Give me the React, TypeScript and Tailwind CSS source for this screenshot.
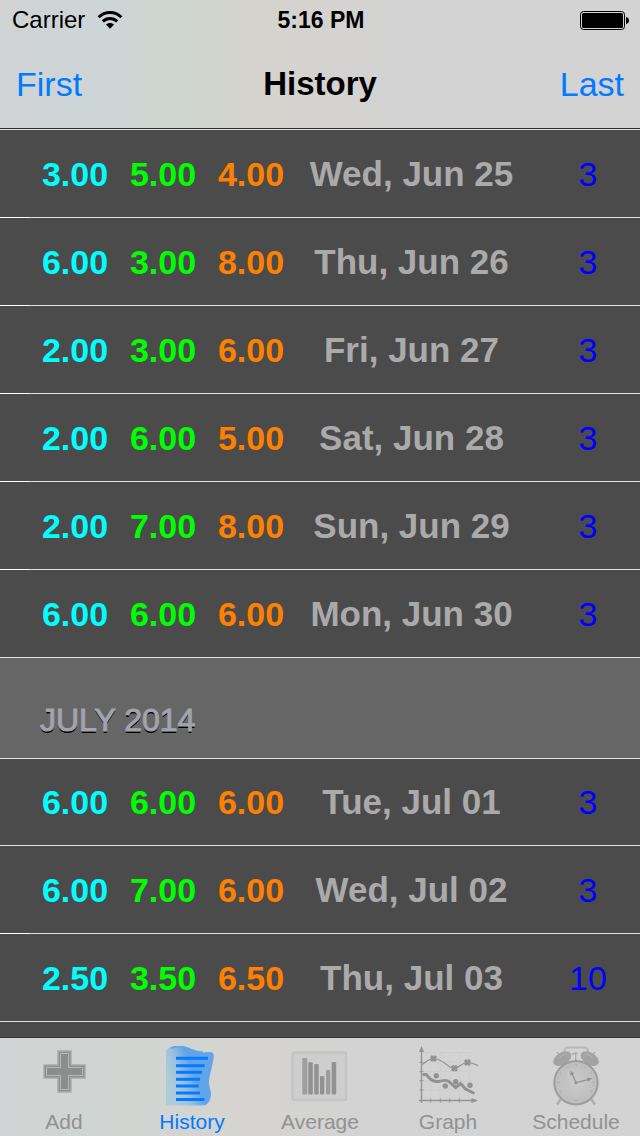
import type { ReactNode } from "react";

type Entry = { a: string; b: string; c: string; date: string; count: number };

const june: Entry[] = [
  { a: "3.00", b: "5.00", c: "4.00", date: "Wed, Jun 25", count: 3 },
  { a: "6.00", b: "3.00", c: "8.00", date: "Thu, Jun 26", count: 3 },
  { a: "2.00", b: "3.00", c: "6.00", date: "Fri, Jun 27", count: 3 },
  { a: "2.00", b: "6.00", c: "5.00", date: "Sat, Jun 28", count: 3 },
  { a: "2.00", b: "7.00", c: "8.00", date: "Sun, Jun 29", count: 3 },
  { a: "6.00", b: "6.00", c: "6.00", date: "Mon, Jun 30", count: 3 },
];

const july: Entry[] = [
  { a: "6.00", b: "6.00", c: "6.00", date: "Tue, Jul 01", count: 3 },
  { a: "6.00", b: "7.00", c: "6.00", date: "Wed, Jul 02", count: 3 },
  { a: "2.50", b: "3.50", c: "6.50", date: "Thu, Jul 03", count: 10 },
];

function WifiIcon() {
  return (
    <svg width="26" height="20" viewBox="0 0 26 20" fill="none" stroke="#000" strokeWidth="3" aria-hidden="true">
      <path d="M1.600 7.200C8 .9 18 .9 24.400 7.200" />
      <path d="M5.800 11.400c4-3.900 10.400-3.900 14.400 0" />
      <path d="M8.900 14.600c2.300-2.200 5.900-2.200 8.200 0L13 18.700z" fill="#000" stroke="none" />
    </svg>
  );
}

function BatteryIcon() {
  return (
    <svg width="50" height="20" viewBox="0 0 50 20" aria-hidden="true">
      <rect x="0.500" y="1.500" width="44" height="18" rx="3" fill="none" stroke="#000" />
      <rect x="2" y="3" width="41" height="15" rx="1.500" fill="#000" />
      <path d="M46 7c2 .5 3 1.800 3 3.500S48 13.500 46 14z" fill="#000" />
    </svg>
  );
}

function AddIcon() {
  return (
    <svg width="60" height="60" viewBox="0 0 60 60" aria-hidden="true">
      <path d="M24 5h13v14h14v13H37v14H24V32H10V19h14z" fill="#8f9090" stroke="#aaacac" strokeWidth="1.500" />
      <path d="M26.500 7.500h8v14h14v8h-14v14h-8v-14h-14v-8h14z" fill="#8c8d8d" stroke="#b6b8b8" strokeWidth="1" />
    </svg>
  );
}

function HistoryIcon() {
  const lines = [
    [12.3, 46],
    [19.7, 42.7],
    [26.3, 40],
    [33.3, 38],
    [40, 36.5],
    [47, 38],
    [53.5, 42.3],
  ];
  return (
    <svg width="60" height="60" viewBox="0 0 60 60" aria-hidden="true">
      <defs>
        <linearGradient id="scroll" x1="2" y1="34" x2="46" y2="18" gradientUnits="userSpaceOnUse">
          <stop offset="0.100" stopColor="#aecbd9" />
          <stop offset="0.350" stopColor="#9ec2dd" />
          <stop offset="0.650" stopColor="#60a3e8" />
          <stop offset="1" stopColor="#62a5ea" />
        </linearGradient>
      </defs>
      <path
        d="M4 6.500C4 2.500 8 1 12 .5C18-.500 23 .5 29.500 3.800C33 5.600 37 6.500 41 6.500L48 6C51 6 52 7.500 51.700 11C50.800 20 47 29 47 37C47 42 50 46 48.700 51C47.500 56 45 59.500 40 59.500H7C5 59.500 4 58.500 4 57z"
        fill="url(#scroll)"
      />
      <path d="M9 2C16-.500 23 .5 29.500 4C33 5.800 37 6.500 41 6.500" fill="none" stroke="#62a5ea" strokeWidth="2" />
      {lines.map(([y, x]) => (
        <path key={y} d={`M14 ${y}H${x}`} stroke="#057bfb" strokeWidth="3" />
      ))}
    </svg>
  );
}

function AverageIcon() {
  return (
    <svg width="60" height="60" viewBox="0 0 60 60" aria-hidden="true">
      <rect x="2.500" y="6.500" width="53.500" height="47.500" rx="2" fill="#cecece" stroke="#c5c5c5" strokeWidth="2.500" />
      <g fill="#929292">
        <rect x="12.300" y="12" width="5" height="36.500" rx="1" fill="#9e9e9e" />
        <rect x="18.300" y="16.300" width="4.500" height="32.200" rx="1" />
        <rect x="24.200" y="18" width="4.500" height="30.500" rx="1" />
        <rect x="30" y="30" width="4.300" height="18.500" rx="1" />
        <rect x="36" y="24" width="4.300" height="24.500" rx="1" fill="#9c9c9c" />
        <rect x="41.700" y="16" width="4.500" height="32.500" rx="1" />
      </g>
    </svg>
  );
}

function GraphIcon() {
  const crosses = [
    [15.5, 12.5],
    [36.5, 22.3],
    [49.5, 16.5],
  ];
  return (
    <svg width="60" height="60" viewBox="0 0 60 60" fill="none" stroke="#929292" aria-hidden="true">
      <path d="M5 6.500h50M5 16h50M5 25.500h50M5 35h50M5 44h50M12.700 6v47M22.300 6v47M31.700 6v47M41.300 6v47M51 6v47" stroke="#cecece" />
      <path d="M3.500 3v54M1 54.500h56" strokeWidth="1.300" />
      <path d="M1.500 16.300h4M1.500 25.700h4M1.500 34.700h4M1.500 44h4M12.700 52.500v4M22.300 52.500v4M31.700 52.500v4M41.300 52.500v4" />
      <path d="M3.500 0L6 6H1zM60 54.500L53.500 52v5z" fill="#929292" stroke="none" />
      <path d="M4.300 18.500C8 16 11 12.500 15.500 12.500S26 16.500 28.500 18.500S33 22.800 37 22.300S44 16.500 49.500 16.500C54 16.500 56 17.500 60 19.500" strokeWidth="1.200" />
      {crosses.map(([x, y]) => (
        <path key={x} d={`M${x - 2.5} ${y - 2.5}l5 5m0-5l-5 5`} strokeWidth="3" />
      ))}
      <path d="M4.500 28.500h4C10 31 11 32 13 33.500C15.500 35.500 17 35.800 20 35.500C24 35 27 33.500 29.500 34.800C33 36.800 35 39.500 37.700 41.500L42.700 37.500L47.500 43L56.500 47.500" strokeWidth="3" />
      <g fill="#929292" stroke="none">
        <circle cx="18.300" cy="29.700" r="2.700" />
        <circle cx="27.300" cy="40" r="2.700" />
        <circle cx="37.700" cy="35.700" r="2.700" />
        <circle cx="52" cy="39.300" r="2.700" />
      </g>
    </svg>
  );
}

function ScheduleIcon() {
  return (
    <svg width="60" height="60" viewBox="0 0 60 60" fill="none" aria-hidden="true">
      <defs>
        <radialGradient id="dial">
          <stop offset="0" stopColor="#cbcbcb" />
          <stop offset="1" stopColor="#bcbcbc" />
        </radialGradient>
      </defs>
      <path d="M15.500 52L11 58.500M44.500 52L49 58.500" stroke="#b0b0b0" strokeWidth="2.600" />
      <path d="M11 6l3 4M49 6l-3 4" stroke="#b4b4b4" strokeWidth="2" />
      <path d="M18.500 8.500V5C18.500 2.500 20 1.500 22.500 1.500H38C40.500 1.500 42 2.500 42 5V8.500" stroke="#b8b8b8" strokeWidth="2" />
      <path d="M29.700 7v7M26 8l5.500-1" stroke="#aaaaaa" strokeWidth="1.400" />
      <ellipse cx="16.300" cy="12.700" rx="10" ry="6" fill="#a3a3a3" transform="rotate(-32 16.300 12.700)" />
      <ellipse cx="43.700" cy="12.700" rx="10" ry="6" fill="#a3a3a3" transform="rotate(32 43.700 12.700)" />
      <path d="M11.500 13.500C14 10.500 17 8.700 21 8M48.500 13.500C46 10.500 43 8.700 39 8" stroke="#b2b2b2" />
      <circle cx="30" cy="36.700" r="21.700" fill="url(#dial)" stroke="#9d9d9d" strokeWidth="2" />
      <path d="M30 18v2M30 53v2M11.500 36.500h2M46.500 36.500h2M20.700 20.500l.5 1M39.300 20.500l-.5 1M14 27.200l1 .5M46 27.200l-1 .5M14 45.800l1-.5M46 45.800l-1-.5M20.700 52.500l.5-1M39.300 52.500l-.5-1" stroke="#a6a6a6" />
      <path d="M30 36.700L25.700 27M30 36.700L43 33.300" stroke="#929292" strokeWidth="1.300" />
      <path d="M24.700 24.800l3.500 3-4 1.700zM46.500 32.400l-4.500 3-1-3.800z" fill="#929292" />
      <circle cx="30" cy="36.700" r="1.500" fill="#929292" />
    </svg>
  );
}

function Row({ entry }: { entry: Entry }) {
  return (
    <tr className="grid h-[88px] grid-cols-[88px_88px_88px_1fr_112px] items-center border-b border-[#e4e4e4] pl-[31px] text-center text-[34px] leading-10 [border-image:linear-gradient(to_right,#fff_30px,#e4e4e4_30px)_1] last:[border-image:none]">
      <td className="font-bold text-[#00ffff]">{entry.a}</td>
      <td className="font-bold text-[#00ff00]">{entry.b}</td>
      <td className="font-bold text-[#ff8000]">{entry.c}</td>
      <td className="whitespace-nowrap text-[35px] font-bold text-[#aaaaaa]">{entry.date}</td>
      <td className="pl-2 text-[#0000ff]">{entry.count}</td>
    </tr>
  );
}

function Tab({ label, icon, active = false }: { label: string; icon: ReactNode; active?: boolean }) {
  return (
    <a
      href={`#${label.toLowerCase()}`}
      aria-current={active ? "page" : undefined}
      className={`flex flex-col items-center gap-1 pt-2 text-[21px] leading-6 ${active ? "text-[#007aff]" : "text-[#929292]"}`}
    >
      {icon}
      {label}
    </a>
  );
}

export default function App() {
  return (
    <div className="flex h-screen flex-col bg-[#4b4b4b] font-['Liberation_Sans',Arial,sans-serif]">
      <header className="border-b border-[#2c2c2e] bg-[#d3d3d3] bg-[linear-gradient(to_right,#d1d3d4_0%,#cdd5d7_13%,#cdd6d0_26%,#d4d4cd_38%,#d5d3d0_48%,#d3d3d3_62%)]">
        <div className="grid h-10 grid-cols-3 items-center pr-2.5 pl-3 text-[24px] leading-7 text-black">
          <div className="flex items-center gap-3">
            <span>Carrier</span>
            <WifiIcon />
          </div>
          <time className="text-center text-[23px] font-bold">5:16 PM</time>
          <div className="flex justify-end">
            <BatteryIcon />
          </div>
        </div>
        <div className="grid h-[88px] grid-cols-3 items-center px-4 text-[34px] leading-10">
          <button type="button" className="justify-self-start text-[#007aff]">First</button>
          <h1 className="text-center text-[33px] font-bold text-black">History</h1>
          <button type="button" className="justify-self-end text-[#007aff]">Last</button>
        </div>
      </header>

      <main className="min-h-0 flex-1 overflow-hidden">
        <table className="block w-full">
          <tbody className="block border-t border-[#e4e4e4]">
            {june.map((e) => (
              <Row key={e.date} entry={e} />
            ))}
          </tbody>
          <tbody className="block">
            <tr className="block">
              <th
                scope="colgroup"
                colSpan={5}
                className="flex h-[100px] items-end bg-[#666666] pb-5 pl-10 text-left text-[32px] leading-9 font-normal text-[#a3a3ad] [-webkit-text-stroke:1px] [text-shadow:0_2px_0_#000]"
              >
                JULY 2014
              </th>
            </tr>
          </tbody>
          <tbody className="block [&>tr:first-child]:border-t [&>tr:first-child]:[border-image:none]">
            {july.map((e) => (
              <Row key={e.date} entry={e} />
            ))}
          </tbody>
        </table>
      </main>

      <nav className="grid h-[99px] grid-cols-5 border-t border-[#333333] bg-[#d3d3d3] bg-[linear-gradient(to_right,#d0d4d4_0%,#d0d5d2_20%,#d5d4d1_36%,#d3d3d3_55%)]">
        <Tab label="Add" icon={<AddIcon />} />
        <Tab label="History" icon={<HistoryIcon />} active />
        <Tab label="Average" icon={<AverageIcon />} />
        <Tab label="Graph" icon={<GraphIcon />} />
        <Tab label="Schedule" icon={<ScheduleIcon />} />
      </nav>
    </div>
  );
}
